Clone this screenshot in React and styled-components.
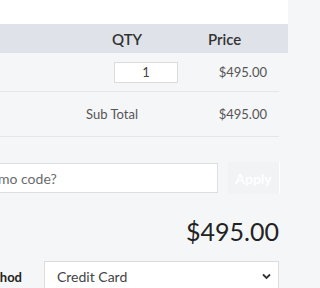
import React, {useState} from 'react'
import styled, {createGlobalStyle} from 'styled-components'

const GlobalStyle = createGlobalStyle`
  *{
    box-sizing:border-box;
  }
  body{
    margin:0;
    background:#f5f6f8;
    font-family:Lato, "Open Sans", sans-serif;
    overflow:hidden;
  }
`

const Page = styled.div`
  width:288px;
  height:288px;
  overflow:hidden;
`

const TopSpace = styled.div`
  height:24px;
  background:#fff;
`

const HeadBar = styled.div`
  height:29px;
  background:#dfe3e9;
  display:grid;
  grid-template-columns:1fr 96px 80px;
  align-items:center;
  span{
    font-size:15px;
    font-weight:600;
    color:#333;
  }
`

const Row = styled.div`
  display:grid;
  grid-template-columns:${props => props.cols};
  align-items:center;
  height:${props => props.h}px;
  margin-right:9px;
  border-bottom:1px solid #e4e6ea;
`

const Price = styled.div`
  text-align:right;
  padding-right:12px;
  font-size:13px;
  color:#555;
`

const QtyInput = styled.input`
  width:64px;
  height:21px;
  margin-left:1px;
  border:1px solid #dcdcdc;
  background:#fff;
  text-align:center;
  font-family:inherit;
  font-size:13px;
  color:#444;
  outline:none;
`

const Label = styled.div`
  text-align:right;
  padding-right:71px;
  font-size:13px;
  color:#555;
`

const PromoRow = styled.div`
  display:flex;
  justify-content:flex-end;
  align-items:center;
  gap:10px;
  margin:25px 8px 0 0;
`

const PromoInput = styled.input`
  flex:0 0 254px;
  height:30px;
  padding:0 12px;
  border:1px solid #dedede;
  background:#fff;
  font-family:inherit;
  font-size:14px;
  outline:none;
  &::placeholder{
    color:#6a6a6a;
  }
`

const ApplyButton = styled.button`
  flex:0 0 52px;
  height:32px;
  border:none;
  border-right:1px solid #fff;
  background:#f2f3f5;
  color:#fff;
  font-family:inherit;
  font-size:14px;
  font-weight:700;
`

const Total = styled.div`
  text-align:right;
  margin:22px 9px 0 0;
  font-size:25px;
  line-height:30px;
  color:#222;
`

const PayRow = styled.div`
  display:flex;
  justify-content:flex-end;
  align-items:center;
  gap:22px;
  margin:15px 9px 0 0;
  label{
    flex:none;
    font-size:13px;
    font-weight:700;
    color:#222;
    white-space:nowrap;
  }
`

const SelectWrap = styled.div`
  position:relative;
  flex:0 0 235px;
  svg{
    position:absolute;
    right:8px;
    top:12px;
    pointer-events:none;
  }
`

const Select = styled.select`
  width:100%;
  height:31px;
  padding:0 12px;
  appearance:none;
  border:1px solid #dcdcdc;
  background:#fff;
  font-family:inherit;
  font-size:14px;
  color:#444;
  outline:none;
`

const App = () => {
  const [qty, setQty] = useState('1')
  const [promo, setPromo] = useState('')
  return (
    <Page>
      <GlobalStyle/>
      <TopSpace/>
      <HeadBar>
        <span></span>
        <span>QTY</span>
        <span>Price</span>
      </HeadBar>
      <Row cols="1fr 96px 70px" h={39}>
        <div></div>
        <div><QtyInput value={qty} onChange={e => setQty(e.target.value)}/></div>
        <Price>$495.00</Price>
      </Row>
      <Row cols="1fr 70px" h={45}>
        <Label>Sub Total</Label>
        <Price>$495.00</Price>
      </Row>
      <PromoRow>
        <PromoInput placeholder="Promo code?" value={promo} onChange={e => setPromo(e.target.value)}/>
        <ApplyButton>Apply</ApplyButton>
      </PromoRow>
      <Total>$495.00</Total>
      <PayRow>
        <label>Payment Method</label>
        <SelectWrap>
          <Select defaultValue="cc">
            <option value="cc">Credit Card</option>
            <option value="pp">PayPal</option>
          </Select>
          <svg width="9" height="7" viewBox="0 0 9 7">
            <path d="M1 1.5 L4.5 5 L8 1.5" fill="none" stroke="#333" strokeWidth="1.8"/>
          </svg>
        </SelectWrap>
      </PayRow>
    </Page>
  )
}

export default App
